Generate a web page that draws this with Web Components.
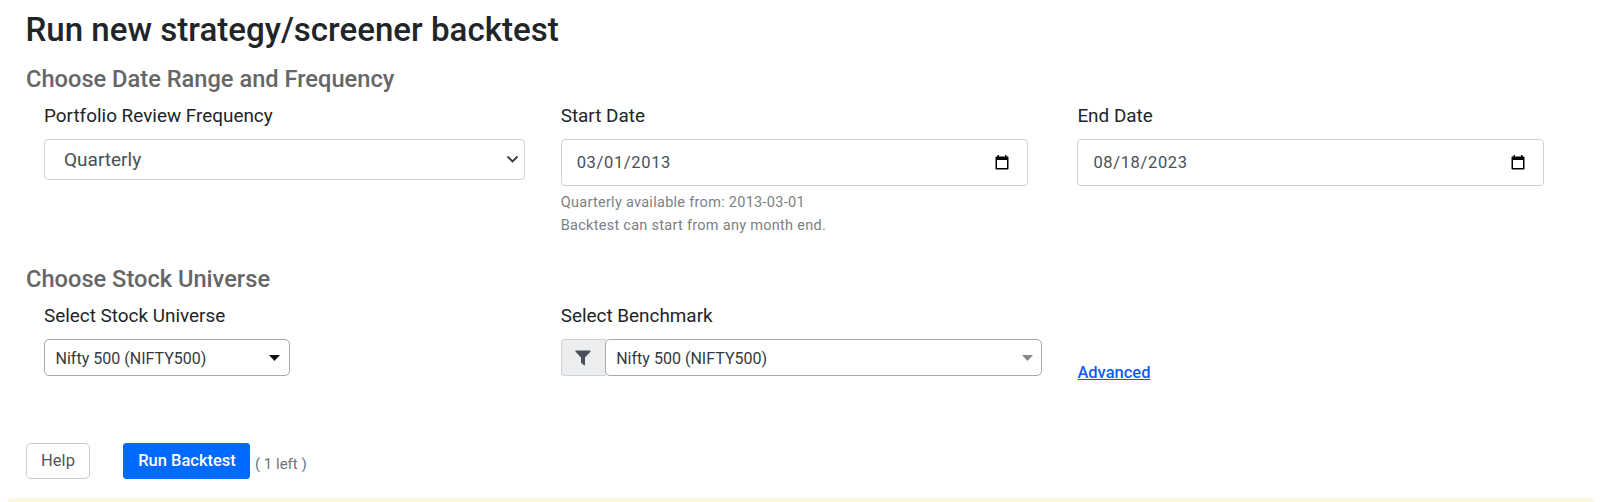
<!DOCTYPE html>
<html lang="en">
<head>
<meta charset="utf-8">
<title>Run new strategy/screener backtest</title>
<style>
	body {
		margin: 0;
		background: #fff;
		font-family: Roboto, "Liberation Sans", sans-serif;
		color: #212529;
		overflow: hidden;
	}
</style>
</head>
<body>
<backtest-page>
	<span slot="title">Run new strategy/screener backtest</span>
	<form-section heading="Choose Date Range and Frequency">
		<form-field label="Portfolio Review Frequency">
			<select-box>Quarterly</select-box>
		</form-field>
		<form-field label="Start Date">
			<date-box>03/01/2013</date-box>
			<help-text slot="help">Quarterly available from: 2013-03-01</help-text>
			<help-text slot="help">Backtest can start from any month end.</help-text>
		</form-field>
		<form-field label="End Date">
			<date-box>08/18/2023</date-box>
		</form-field>
	</form-section>
	<form-section heading="Choose Stock Universe">
		<form-field label="Select Stock Universe">
			<search-select>Nifty 500 (NIFTY500)</search-select>
		</form-field>
		<form-field label="Select Benchmark">
			<search-select filter>Nifty 500 (NIFTY500)</search-select>
		</form-field>
		<advanced-link>Advanced</advanced-link>
	</form-section>
	<action-bar slot="actions">
		<action-button>Help</action-button>
		<action-button primary>Run Backtest</action-button>
		<span slot="note">( 1 left )</span>
	</action-bar>
</backtest-page>

<script>
class BacktestPage extends HTMLElement {
	constructor() {
		super();
		this.attachShadow({ mode: 'open' });
		this.shadowRoot.innerHTML = `
		<style>
			:host {
				display: flex;
				flex-direction: column;
				box-sizing: border-box;
				height: 502px;
				padding-top: 10px;
				overflow: hidden;
			}

			h2 {
				margin: 0 0 15px 25.5px;
				font-size: 33.1px;
				line-height: 40px;
				font-weight: 500;
			}

			.sections {
				display: flex;
				flex-direction: column;
				height: 378px;
			}

			/* Top edge of the notice under the form */
			.notice {
				flex: none;
				height: 40px;
				margin: 19px 5px 0 7px;
				border-radius: 5px;
				background: #fcf6df;
			}
		</style>
		<h2><slot name="title"></slot></h2>
		<div class="sections"><slot></slot></div>
		<slot name="actions"></slot>
		<div class="notice"></div>
		`
	}
}
customElements.define('backtest-page', BacktestPage);

class FormSection extends HTMLElement {
	constructor() {
		super();
		this.attachShadow({ mode: 'open' });
		this.shadowRoot.innerHTML = `
		<style>
			:host {
				display: block;
				height: 200px;
				flex: none;
			}

			h4 {
				margin: 0 0 9px 26px;
				font-size: 23.65px;
				line-height: 28px;
				font-weight: 500;
				color: #666;
			}

			.row {
				display: grid;
				grid-template-columns: repeat(3, 516.7px);
				padding-left: 44px;
			}
		</style>
		<h4></h4>
		<div class="row"><slot></slot></div>
		`
	}

	connectedCallback() {
		this.shadowRoot.querySelector("h4").textContent = this.getAttribute('heading');
	}
}
customElements.define('form-section', FormSection);

class FormField extends HTMLElement {
	constructor() {
		super();
		this.attachShadow({ mode: 'open' });
		this.shadowRoot.innerHTML = `
		<style>
			:host {
				display: block;
			}

			label {
				display: block;
				margin-bottom: 9px;
				font-size: 18.9px;
				line-height: 28px;
			}

			.help {
				display: flex;
				flex-direction: column;
				padding-top: 5px;
			}
		</style>
		<label></label>
		<slot></slot>
		<div class="help"><slot name="help"></slot></div>
		`
	}

	connectedCallback() {
		this.shadowRoot.querySelector("label").textContent = this.getAttribute('label');
	}
}
customElements.define('form-field', FormField);

class HelpText extends HTMLElement {
	constructor() {
		super();
		this.attachShadow({ mode: 'open' });
		this.shadowRoot.innerHTML = `
		<style>
			:host {
				display: block;
				font-size: 14.5px;
				line-height: 23.4px;
				letter-spacing: 0.28px;
				color: #7c8084;
			}
		</style>
		<span><slot></slot></span>
		`
	}
}
customElements.define('help-text', HelpText);

class SelectBox extends HTMLElement {
	constructor() {
		super();
		this.attachShadow({ mode: 'open' });
		this.shadowRoot.innerHTML = `
		<style>
			:host {
				display: flex;
				align-items: center;
				justify-content: space-between;
				box-sizing: border-box;
				width: 481px;
				height: 41px;
				padding: 0 5px 0 19px;
				border: 1px solid #ced1d4;
				border-radius: 4px;
				font-size: 19px;
				color: #495057;
			}
		</style>
		<span><slot></slot></span>
		<svg width="13" height="9" viewBox="0 0 13 9"><path d="M1.5 1.5L6.5 6.5L11.5 1.5" fill="none" stroke="#343a40" stroke-width="1.8"/></svg>
		`
	}
}
customElements.define('select-box', SelectBox);

class DateBox extends HTMLElement {
	constructor() {
		super();
		this.attachShadow({ mode: 'open' });
		this.shadowRoot.innerHTML = `
		<style>
			:host {
				display: flex;
				align-items: center;
				justify-content: space-between;
				box-sizing: border-box;
				width: 467px;
				height: 47px;
				padding: 0 18px 1px 15px;
				border: 1px solid #ced1d4;
				border-radius: 4px;
				font-size: 16.5px;
				letter-spacing: 0.65px;
				color: #495057;
			}
		</style>
		<span><slot></slot></span>
		<svg width="14" height="15" viewBox="0 0 14 15"><path d="M2.5 0H4V1.5H10V0H11.5V1.5H12.5Q13.5 1.5 13.5 2.5V13.5Q13.5 14.5 12.5 14.5H1.5Q.5 14.5 .5 13.5V2.5Q.5 1.5 1.5 1.5H2.5ZM2 5V13H12V5Z" fill="#000" fill-rule="evenodd"/></svg>
		`
	}
}
customElements.define('date-box', DateBox);

class SearchSelect extends HTMLElement {
	constructor() {
		super();
		this.attachShadow({ mode: 'open' });
		this.shadowRoot.innerHTML = `
		<style>
			:host {
				display: flex;
				width: 246px;
				height: 37px;
				--arrow: #111;
			}

			:host([filter]) {
				width: 481px;
				--arrow: #888;
			}

			.addon {
				display: none;
				align-items: center;
				justify-content: center;
				box-sizing: border-box;
				width: 45px;
				padding-right: 1px;
				margin-right: -1px;
				border: 1px solid #ced1d4;
				border-right: none;
				border-radius: 4px 0 0 4px;
				background: #ebedef;
			}

			:host([filter]) .addon {
				display: flex;
			}

			.box {
				display: flex;
				flex: 1;
				align-items: center;
				justify-content: space-between;
				box-sizing: border-box;
				padding: 0 9px 0 10.5px;
				border: 1px solid #aaa;
				border-radius: 5px;
				background: #fff;
				font-size: 16.05px;
				color: #343a40;
			}

			.box span {
				padding-top: 1px;
			}

			:host([filter]) .box {
				padding-right: 8px;
			}
		</style>
		<div class="addon">
			<svg width="16" height="16" viewBox="0 0 16 16"><path d="M.8 .5H15.2Q16 1 15.4 1.8L10 7.4V15Q9.7 15.7 9 15.3L6.5 13.3Q6 13 6 12.3V7.4L.6 1.8Q0 1 .8 .5Z" fill="#495057"/></svg>
		</div>
		<div class="box">
			<span><slot></slot></span>
			<svg width="11" height="6" viewBox="0 0 11 6"><path d="M0 0H11L5.5 6Z" fill="var(--arrow)"/></svg>
		</div>
		`
	}
}
customElements.define('search-select', SearchSelect);

class AdvancedLink extends HTMLElement {
	constructor() {
		super();
		this.attachShadow({ mode: 'open' });
		this.shadowRoot.innerHTML = `
		<style>
			:host {
				display: block;
				padding-top: 59px;
				font-size: 16.5px;
				line-height: 24px;
				font-weight: 500;
				color: #0d5bff;
			}

			a {
				text-decoration: underline;
				cursor: pointer;
			}
		</style>
		<a><slot></slot></a>
		`
	}
}
customElements.define('advanced-link', AdvancedLink);

class ActionBar extends HTMLElement {
	constructor() {
		super();
		this.attachShadow({ mode: 'open' });
		this.shadowRoot.innerHTML = `
		<style>
			:host {
				display: flex;
				height: 36px;
				padding-left: 26px;
			}

			.buttons {
				display: flex;
				gap: 33px;
			}

			.note {
				padding: 9px 0 0 5px;
				font-size: 15px;
				line-height: 24px;
				color: #6c757d;
			}
		</style>
		<div class="buttons"><slot></slot></div>
		<div class="note"><slot name="note"></slot></div>
		`
	}
}
customElements.define('action-bar', ActionBar);

class ActionButton extends HTMLElement {
	constructor() {
		super();
		this.attachShadow({ mode: 'open' });
		this.shadowRoot.innerHTML = `
		<style>
			:host {
				display: block;
				width: 64px;
				height: 36px;
			}

			:host([primary]) {
				width: 127px;
			}

			button {
				display: block;
				width: 100%;
				height: 100%;
				padding: 0 0 2px;
				border: 1px solid #ccc;
				border-radius: 5px;
				background: #fff;
				color: #555;
				font: 400 16.5px Roboto, "Liberation Sans", sans-serif;
			}

			:host([primary]) button {
				padding-left: 1px;
				border-color: #0069ff;
				border-radius: 3px;
				background: #0069ff;
				color: #fff;
				font-weight: 500;
			}
		</style>
		<button><slot></slot></button>
		`
	}
}
customElements.define('action-button', ActionButton);
</script>
</body>
</html>
